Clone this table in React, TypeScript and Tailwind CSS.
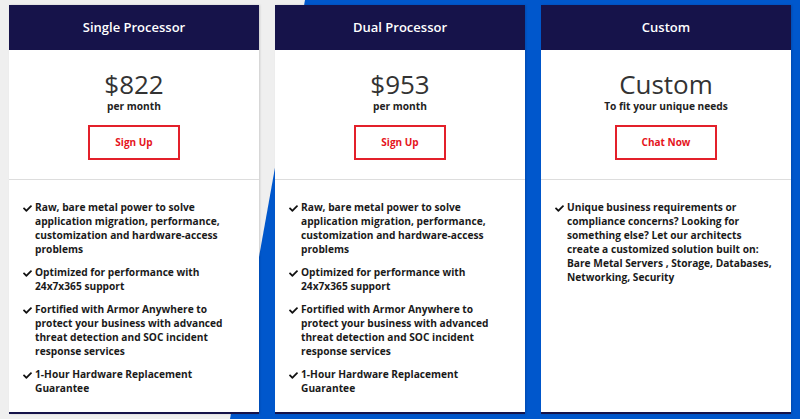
import React from 'react';

type Plan = {
  title: string;
  price: string;
  sub: string;
  cta: string;
  features: string[];
};

const plans: Plan[] = [
  {
    title: 'Single Processor',
    price: '$822',
    sub: 'per month',
    cta: 'Sign Up',
    features: [
      'Raw, bare metal power to solve application migration, performance, customization and hardware-access problems',
      'Optimized for performance with 24x7x365 support',
      'Fortified with Armor Anywhere to protect your business with advanced threat detection and SOC incident response services',
      '1-Hour Hardware Replacement Guarantee',
    ],
  },
  {
    title: 'Dual Processor',
    price: '$953',
    sub: 'per month',
    cta: 'Sign Up',
    features: [
      'Raw, bare metal power to solve application migration, performance, customization and hardware-access problems',
      'Optimized for performance with 24x7x365 support',
      'Fortified with Armor Anywhere to protect your business with advanced threat detection and SOC incident response services',
      '1-Hour Hardware Replacement Guarantee',
    ],
  },
  {
    title: 'Custom',
    price: 'Custom',
    sub: 'To fit your unique needs',
    cta: 'Chat Now',
    features: [
      'Unique business requirements or compliance concerns? Looking for something else? Let our architects create a customized solution built on: Bare Metal Servers , Storage, Databases, Networking, Security',
    ],
  },
];

const Check = () => (
  <svg viewBox="0 0 512 512" className="w-[9px] h-[9px] mt-[4px] shrink-0 fill-[#111]">
    <path d="M173.898 439.404l-166.4-166.4c-9.997-9.997-9.997-26.206 0-36.204l36.203-36.204c9.997-9.998 26.207-9.998 36.204 0L192 312.69 432.095 72.596c9.997-9.997 26.207-9.997 36.204 0l36.203 36.204c9.997 9.997 9.997 26.206 0 36.204l-294.4 294.401c-9.998 9.997-26.207 9.997-36.204-.001z" />
  </svg>
);

const PlanCard = ({ plan }: { plan: Plan }) => (
  <div className="w-[250px] h-[409px] shrink-0 bg-white border-b-2 border-[#16134a] shadow-[1px_0_2px_rgba(0,0,0,0.15)] flex flex-col">
    <div className="h-[45px] bg-[#16134a] flex items-center justify-center text-white text-[13px] font-semibold">
      {plan.title}
    </div>

    <div className="flex flex-col items-center pt-[20px] pb-[19px] border-b border-[#dddddd]">
      <div className="text-[26px] leading-[28px] text-[#333333]">{plan.price}</div>
      <div className="mt-[1px] text-[10.2px] leading-[14px] font-bold text-[#222222]">{plan.sub}</div>
      <a className="mt-[12px] h-[35px] px-[25px] border-2 border-[#e3202a] text-[#e5141c] text-[10px] font-bold flex items-center">
        {plan.cta}
      </a>
    </div>

    <ul className="pt-[20px] pl-[14px] flex flex-col gap-[9px]">
      {plan.features.map((f, i) => (
        <li key={i} className="flex gap-[3px]">
          <Check />
          <span className="w-[208px] text-[10.2px] leading-[14px] font-bold text-[#1a1a1a]">{f}</span>
        </li>
      ))}
    </ul>
  </div>
);

export default function App() {
  return (
    <div className="relative w-[800px] h-[419px] overflow-hidden bg-[#efefef] font-['Open_Sans',sans-serif]">
      {/* diagonal blue backdrop */}
      <div className="absolute inset-0 bg-[#0057cc] [clip-path:polygon(305px_0,800px_0,800px_419px,230px_419px)]" />

      <div className="relative flex gap-4 pl-[9px] pt-[5px]">
        {plans.map((p) => (
          <PlanCard key={p.title} plan={p} />
        ))}
      </div>
    </div>
  );
}
